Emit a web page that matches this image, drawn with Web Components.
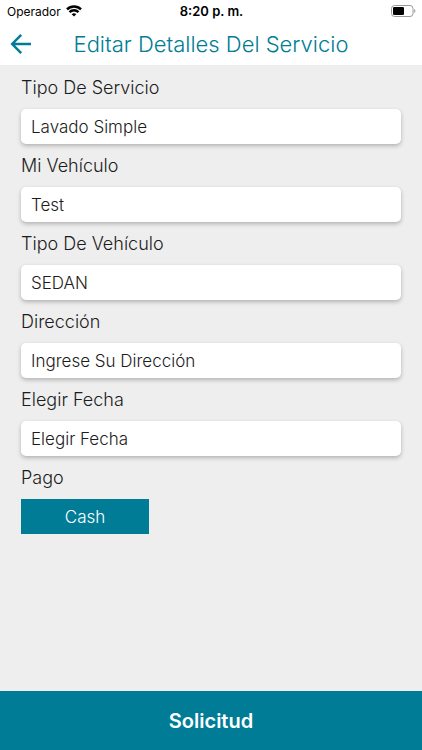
<!DOCTYPE html>
<html lang="es">
<head>
<meta charset="utf-8">
<meta name="viewport" content="width=device-width, initial-scale=1">
<title>Editar Detalles Del Servicio</title>
<style>
  :root { --teal: #007c97; --page: #eeeeee; --ink: #1c1c1c; }
  html, body { height: 100%; margin: 0; }
  body { font-family: Inter, "Liberation Sans", sans-serif; font-weight: 300; color: var(--ink); background: var(--page); }
</style>
</head>
<body>
<service-app></service-app>
<script>
  const define = (name, html, setup) => {
    const template = document.createElement('template');
    template.innerHTML = html;
    customElements.define(name, class extends HTMLElement {
      constructor() {
        super();
        this.attachShadow({ mode: 'open' }).append(template.content.cloneNode(true));
      }
      connectedCallback() { if (setup) setup(this, this.shadowRoot); }
    });
  };

  define('status-bar', `
    <style>
      :host { display: grid; grid-template-columns: 1fr auto 1fr; align-items: center; height: 22px; padding: 0 6px 0 7px; color: #000; background: #fff; }
      .carrier { display: flex; align-items: center; gap: 5px; font-size: 12px; font-weight: 400; }
      .time { font-size: 13px; font-weight: 600; }
      .battery { justify-self: end; }
      svg { display: block; }
    </style>
    <span class="carrier"><slot name="carrier"></slot>
      <svg width="16" height="12" viewBox="0 0 16 12" fill="none" stroke="#000" stroke-width="2.4" aria-hidden="true">
        <path d="M1 4.3a10 10 0 0 1 14 0M3.5 7.1a6.4 6.4 0 0 1 9 0"/>
        <path d="M8 11.6 5.7 9.3a3.3 3.3 0 0 1 4.6 0z" fill="#000" stroke="none"/>
      </svg>
    </span>
    <span class="time"><slot name="time"></slot></span>
    <svg class="battery" width="25" height="12" viewBox="0 0 25 12" aria-hidden="true">
      <rect x=".5" y=".5" width="21.5" height="11" rx="3" fill="#fff" stroke="#999"/>
      <rect x="2" y="2" width="11" height="8" rx="1.3"/>
      <path d="M23.2 4v4c1.6-.7 1.6-3.3 0-4z" fill="#999"/>
    </svg>`);

  define('title-bar', `
    <style>
      :host { display: grid; grid-template-columns: 42px 1fr 42px; align-items: center; height: 43px; color: var(--teal); background: #fff; }
      button { display: flex; justify-content: center; padding: 0; border: 0; background: none; color: inherit; cursor: pointer; }
      h1 { margin: 0; font-size: 22px; line-height: 28px; font-weight: 300; text-align: center; white-space: nowrap; }
    </style>
    <button type="button" aria-label="Volver">
      <svg width="22" height="22" viewBox="0 0 22 22" fill="none" stroke="currentColor" stroke-width="2.5" aria-hidden="true"><path d="M21 11H2.5M11.2 1.8 2.2 11l9 9.2"/></svg>
    </button>
    <h1><slot></slot></h1>`);

  define('form-field', `
    <style>
      :host { display: flex; flex-direction: column; gap: 10px; }
      label { font-size: 18px; line-height: 22px; }
      input { box-sizing: border-box; width: 100%; height: 35px; padding: 0 10px; border: 0; border-radius: 5px; background: #fff; color: inherit; font: inherit; font-size: 17px; box-shadow: 0 2px 4px rgba(0,0,0,.25); }
    </style>
    <label for="control"></label>
    <input id="control" type="text">`, (host, root) => {
      root.querySelector('label').textContent = host.getAttribute('label');
      root.querySelector('input').value = host.getAttribute('value');
    });

  define('payment-choice', `
    <style>
      :host { display: block; }
      .group { display: flex; flex-direction: column; align-items: flex-start; gap: 10px; }
      .label { font-size: 18px; line-height: 22px; }
      button { min-width: 128px; height: 35px; padding: 0 16px; border: 0; background: var(--teal); color: #fff; font: inherit; font-size: 17px; cursor: pointer; }
    </style>
    <div class="group" role="group" aria-labelledby="label">
      <span class="label" id="label"><slot name="label"></slot></span>
      <button type="button"><slot></slot></button>
    </div>`);

  define('submit-bar', `
    <style>
      :host { display: block; }
      button { display: block; width: 100%; height: 59px; padding: 0; border: 0; background: var(--teal); color: #fff; font: inherit; font-size: 20px; font-weight: 600; cursor: pointer; }
    </style>
    <button type="button"><slot></slot></button>`);

  define('service-app', `
    <style>
      :host { display: flex; flex-direction: column; min-height: 100%; }
      main { flex: 1; display: flex; flex-direction: column; gap: 11px; padding: 12px 21px; }
    </style>
    <status-bar><span slot="carrier">Operador</span><span slot="time">8:20 p. m.</span></status-bar>
    <title-bar>Editar Detalles Del Servicio</title-bar>
    <main>
      <form-field label="Tipo De Servicio" value="Lavado Simple"></form-field>
      <form-field label="Mi Vehículo" value="Test"></form-field>
      <form-field label="Tipo De Vehículo" value="SEDAN"></form-field>
      <form-field label="Dirección" value="Ingrese Su Dirección"></form-field>
      <form-field label="Elegir Fecha" value="Elegir Fecha"></form-field>
      <payment-choice><span slot="label">Pago</span>Cash</payment-choice>
    </main>
    <submit-bar>Solicitud</submit-bar>`);
</script>
</body>
</html>
